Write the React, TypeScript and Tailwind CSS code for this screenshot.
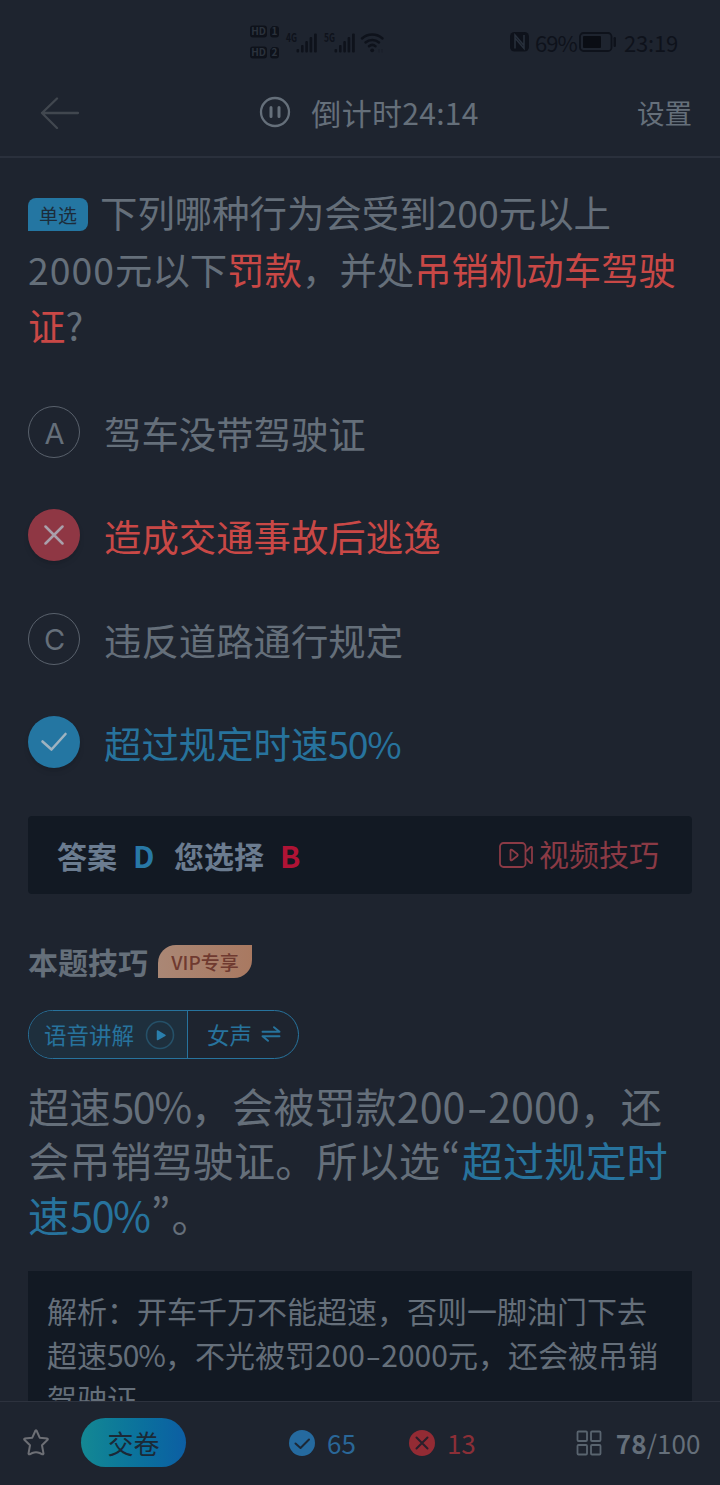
// src/App.tsx
import React from 'react';

type OptionState = 'idle' | 'wrong' | 'right';

interface Option {
  key: string;
  text: string;
  percent?: string;
  state: OptionState;
}

const OPTIONS: Option[] = [
  { key: 'A', text: '驾车没带驾驶证', state: 'idle' },
  { key: 'B', text: '造成交通事故后逃逸', state: 'wrong' },
  { key: 'C', text: '违反道路通行规定', state: 'idle' },
  { key: 'D', text: '超过规定时速', percent: '50%', state: 'right' },
];

const OPTION_COLOR: Record<OptionState, string> = {
  idle: 'text-[#656f7a]',
  wrong: 'text-[#c94846]',
  right: 'text-[#27739d]',
};

const SimTag: React.FC<{ n: string }> = ({ n }) => (
  <svg className="overflow-visible" width="29" height="13" viewBox="0 0 29 13">
    <rect x="0" y="0.5" width="17" height="12" rx="3" fill="#0e121b" />
    <text x="8.5" y="10.2" textAnchor="middle" fontSize="10" fontWeight="700" fill="#2b323d">HD</text>
    <path d="M22.5 1H26a3 3 0 0 1 3 3v5.5a3 3 0 0 1-3 3h-3a3 3 0 0 1-3-3V4z" fill="#0e121b" />
    <text x="24.5" y="10.2" textAnchor="middle" fontSize="10" fontWeight="700" fill="#2b323d">{n}</text>
  </svg>
);

const Signal: React.FC<{ label: string }> = ({ label }) => (
  <svg className="overflow-visible" width="32" height="21" viewBox="0 0 32 21" fill="#0e121b">
    <text x="0" y="10" fontSize="12" fontWeight="700" textLength="11" lengthAdjust="spacingAndGlyphs">{label}</text>
    <rect x="10.5" y="17" width="2.6" height="3.5" rx="1" />
    <rect x="15" y="13" width="2.6" height="7.5" rx="1" />
    <rect x="19.3" y="9" width="2.6" height="11.5" rx="1" />
    <rect x="23.6" y="5" width="2.6" height="15.5" rx="1" />
    <rect x="28" y="1.5" width="2.8" height="19" rx="1" />
  </svg>
);

const StatusBar: React.FC = () => (
  <div className="flex h-[72px] shrink-0 items-center justify-between pt-[12px] pr-[43px] pl-[250px] text-[#0e121b]">
    <div className="flex items-center">
      <div className="flex flex-col gap-[8px]">
        <SimTag n="1" />
        <SimTag n="2" />
      </div>
      <div className="ml-[7px] flex gap-[6px]">
        <Signal label="4G" />
        <Signal label="5G" />
      </div>
      <svg className="ml-[4px]" width="25" height="21" viewBox="0 0 25 21" fill="none" stroke="#0e121b" strokeWidth="2.5" strokeLinecap="round">
        <path d="M2 6.5a15 15 0 0 1 20.5 0" />
        <path d="M5.5 10.5a10 10 0 0 1 13.5 0" />
        <path d="M9 14.3a5 5 0 0 1 6.5 0" />
        <circle cx="12.2" cy="18.3" r="1.9" fill="#0e121b" stroke="none" />
        <path d="M19 17.5v2.5M22 17.5v2.5" strokeWidth="1" stroke="#181d28" />
      </svg>
    </div>
    <div className="flex items-center">
      <svg width="19" height="20" viewBox="0 0 19 20">
        <rect width="19" height="19.5" rx="4.5" fill="#0e121b" />
        <path d="M5 16.5V3l9 10.500M14 3v13.500L5 6" fill="none" stroke="#28303c" strokeWidth="1.5" />
      </svg>
      <span className="ml-[6px] w-[41px] text-[22px] leading-none tracking-[-1px]">69%</span>
      <svg className="ml-[3px]" width="38" height="20" viewBox="0 0 38 20">
        <rect x="1" y="1" width="31.5" height="18" rx="3.5" fill="none" stroke="#0e121b" strokeWidth="1.8" />
        <rect x="4" y="4" width="18" height="12" rx="1" fill="#0a0d14" />
        <rect x="34.5" y="5" width="2.5" height="10" rx="1.2" fill="#0e121b" />
      </svg>
      <span className="ml-[7px] w-[53px] text-[22px] leading-none tracking-[-0.2px]">23:19</span>
    </div>
  </div>
);

const Header: React.FC = () => (
  <header className="flex h-[86px] shrink-0 items-center justify-between border-b-2 border-[#2a303c] pr-[28px] pb-[2px] pl-[40px] text-[#656f7a]">
    <svg width="40" height="32" viewBox="0 0 40 32" fill="none" stroke="#41474f" strokeWidth="2.3" strokeLinecap="round" strokeLinejoin="round">
      <path d="M17 1.5L2 16l15 15M2 16h36" />
    </svg>
    <div className="ml-[21px] flex items-center pb-[2px]">
      <svg width="32" height="32" viewBox="0 0 32 32" fill="none" stroke="#656f7a" strokeWidth="2.3">
        <circle cx="16" cy="16" r="14" />
        <path d="M12 11.500v9M20 11.500v9" strokeWidth="3" strokeLinecap="round" />
      </svg>
      <span className="ml-[20px] text-[30px] leading-none tracking-[0.3px]">倒计时24:14</span>
    </div>
    <span className="text-[27.5px] leading-none">设置</span>
  </header>
);

const OptionMark: React.FC<{ option: Option }> = ({ option }) => {
  if (option.state === 'wrong') {
    return (
      <span className="flex size-[52px] shrink-0 items-center justify-center rounded-full bg-[#8f3744] shadow-md">
        <svg width="20" height="20" viewBox="0 0 20 20" stroke="#a9a0ab" strokeWidth="2.5" strokeLinecap="round">
          <path d="M1.5 1.5l17 17M18.5 1.5l-17 17" />
        </svg>
      </span>
    );
  }
  if (option.state === 'right') {
    return (
      <span className="flex size-[52px] shrink-0 items-center justify-center rounded-full bg-[#2476a2] shadow-md">
        <svg width="28" height="20" viewBox="0 0 28 20" fill="none" stroke="#9fb3c0" strokeWidth="2.6" strokeLinecap="round" strokeLinejoin="round">
          <path d="M2.5 9.5l9 8L25.5 2" />
        </svg>
      </span>
    );
  }
  return (
    <span className="flex size-[52px] shrink-0 items-center justify-center rounded-full border border-[#59616c] pt-[2px] pl-px font-[Inter] text-[29px] leading-none text-[#656f7a]">
      {option.key}
    </span>
  );
};

const Question: React.FC = () => (
  <h1 className="text-[37.4px] leading-[56.5px] font-normal whitespace-nowrap text-[#656f7a]">
    <div className="flex items-center">
      <span className="mt-[5px] mr-[12px] flex h-[33px] w-[60px] items-center justify-center rounded-t-[8px] rounded-br-[8px] bg-[#2476a2] text-[19px] leading-none text-[#1c2c3a]">
        单选
      </span>
      下列哪种行为会受到200元以上
    </div>
    <div>
      <span className="tracking-[1px]">2000</span>元以下<span className="text-[#c94846]">罚款</span>，并处
      <span className="text-[#c94846]">吊销机动车驾驶</span>
    </div>
    <div>
      <span className="text-[#c94846]">证</span>?
    </div>
  </h1>
);

const AnswerBar: React.FC = () => (
  <div className="mt-[47.4px] flex h-[78px] items-center justify-between rounded-[4px] bg-[#121923] pr-[33px] pl-[29px]">
    <div className="flex items-center text-[30px] leading-none font-bold text-[#6b7c90]">
      <span>答案</span>
      <span className="ml-[16px] w-[24px] text-[#2878a6]">D</span>
      <span className="ml-[17px]">您选择</span>
      <span className="ml-[16px] text-[#b01335]">B</span>
    </div>
    <div className="flex items-center text-[30px] leading-none text-[#8b3a45]">
      <svg className="mr-[6px]" width="34" height="26" viewBox="0 0 34 26" fill="none" stroke="#8b3a45" strokeWidth="1.8" strokeLinejoin="round">
        <rect x="1" y="1" width="25.5" height="24" rx="3.5" />
        <path d="M11.500 8.300v9.400q.3 1 1.300.5l5.500-4.200q1-1 0-2l-5.500-4.200q-1-.5-1.300.5z" />
        <path d="M27 9.500l4.500-4.500q1.300-.5 1.500.7v14.600q-.2 1.200-1.500.7L27 16.500" />
      </svg>
      <span className="mb-[4px]">视频技巧</span>
    </div>
  </div>
);

const VoicePill: React.FC = () => (
  <div className="mt-[32px] flex h-[49px] w-[271px] overflow-hidden rounded-full border border-[#27739d] text-[22.5px] leading-none text-[#27739d]">
    <div className="flex w-[159px] items-center border-r border-[#27739d] bg-[#1e2f3d] pl-[15px]">
      <span>语音讲解</span>
      <svg className="mt-[2px] ml-[11px]" width="30" height="30" viewBox="0 0 30 30">
        <circle cx="15" cy="15" r="13.5" fill="none" stroke="#255068" strokeWidth="1.6" />
        <path d="M12.500 11v8.500l7.500-4.200z" fill="#2a7fad" stroke="#2a7fad" strokeWidth="1.5" strokeLinejoin="round" />
      </svg>
    </div>
    <div className="flex items-center pl-[19px]">
      <span>女声</span>
      <svg className="ml-[9px]" width="20" height="16" viewBox="0 0 20 16" fill="none" stroke="#27739d" strokeWidth="1.9" strokeLinecap="round" strokeLinejoin="round">
        <path d="M1.500 5.700h17L13 1.200M18.500 10.300h-17l5.500 4.500" />
      </svg>
    </div>
  </div>
);

const Tip: React.FC = () => (
  <div className="mt-[19px] text-[41.2px] leading-[54.7px] whitespace-nowrap text-[#656f7a]">
    <div>
      超速<span className="ml-px tracking-[-1.4px]">50%</span>，会被罚款200
      <span className="mx-[4.3px] inline-block scale-x-150">-</span>
      2000，还
    </div>
    <div>
      会吊销驾驶证。所以选<span className="mx-[1.2px] [font-feature-settings:'pwid']">“</span>
      <span className="text-[#27739d]">超过规定时</span>
    </div>
    <div>
      <span className="text-[#27739d]">
        速<span className="ml-px tracking-[-1.4px]">50%</span>
      </span>
      <span className="mx-[1.2px] [font-feature-settings:'pwid']">”</span>。
    </div>
  </div>
);

const Footer: React.FC = () => (
  <footer className="flex h-[84px] shrink-0 items-center border-t border-[#2d323e] bg-[#1e242f] pb-[2px] pl-[21px] text-[26px] leading-none">
    <svg width="29" height="29" viewBox="0 0 29 29" fill="none" stroke="#6d6f75" strokeWidth="2" strokeLinejoin="round">
      <path d="M14.500 2.500q.5-.7 1 0l3.200 7.200 7.600.9q1 .4.300 1.200l-5.600 5.400 1.500 8.400q-.2 1-1.200.7l-2.600-1.300q-3.700-1.500-7.400 0l-2.600 1.300q-1 .3-1.200-.7l1.500-8.400-5.600-5.400q-.7-.8.300-1.200l7.600-.9z" />
    </svg>
    <button className="ml-[31px] h-[49px] w-[105px] rounded-full bg-linear-to-r from-[#148893] to-[#0d5ea3] text-[#1b2936]">
      交卷
    </button>
    <div className="ml-[103px] flex items-center text-[#2a6798]">
      <svg width="26" height="26" viewBox="0 0 26 26" fill="none">
        <circle cx="13" cy="13" r="13" fill="#256a9f" />
        <path d="M6.500 13.500l5 4.500 8.500-8.500" stroke="#1c2836" strokeWidth="2" strokeLinecap="round" strokeLinejoin="round" />
      </svg>
      <span className="ml-[12px]">65</span>
    </div>
    <div className="ml-[53px] flex items-center text-[#8b2f37]">
      <svg width="26" height="26" viewBox="0 0 26 26" fill="none">
        <circle cx="13" cy="13" r="13" fill="#932b34" />
        <path d="M7.500 7.500l11 11M18.500 7.500l-11 11" stroke="#291f2b" strokeWidth="2" strokeLinecap="round" />
      </svg>
      <span className="ml-[12px]">13</span>
    </div>
    <div className="ml-[100px] flex items-center text-[#656f7a]">
      <svg width="26" height="26" viewBox="0 0 26 26" fill="none" stroke="#59646f" strokeWidth="1.8">
        <rect x="1.5" y="1.5" width="9.5" height="9.5" rx="1" />
        <rect x="15" y="1.5" width="9.5" height="9.5" rx="1" />
        <rect x="1.5" y="15" width="9.5" height="9.5" rx="1" />
        <rect x="15" y="15" width="9.5" height="9.5" rx="1" />
      </svg>
      <span className="ml-[14px] tracking-[0.1px]"><b>78</b>/100</span>
    </div>
  </footer>
);

const App: React.FC = () => {
  return (
    <div className="flex h-[1485px] w-[720px] flex-col overflow-hidden bg-[#1e242f] font-['Noto_Sans_CJK_SC',sans-serif]">
      <StatusBar />
      <Header />

      <main className="min-h-0 flex-1 overflow-hidden px-[28px] pt-[26px]">
        <Question />

        <ul className="mt-[52.5px] flex flex-col gap-[51.4px]">
          {OPTIONS.map((o) => (
            <li key={o.key} className="flex h-[52px] items-center">
              <OptionMark option={o} />
              <span className={`mt-[3px] ml-[24px] text-[37.4px] leading-none ${OPTION_COLOR[o.state]}`}>
                {o.text}
                {o.percent && <span className="tracking-[-1.3px]">{o.percent}</span>}
              </span>
            </li>
          ))}
        </ul>

        <AnswerBar />

        <div className="mt-[51px] flex h-[33px] items-center">
          <h2 className="text-[30px] leading-none font-bold text-[#656f7a]">本题技巧</h2>
          <span className="ml-[10px] flex h-[33px] w-[94px] items-center justify-center rounded-tl-[18px] rounded-br-[18px] bg-linear-to-r from-[#aa8775] to-[#a97961] text-[19px] leading-none font-medium text-[#6f3a30]">
            VIP专享
          </span>
        </div>

        <VoicePill />
        <Tip />

        <div className="mt-[29px] h-[180px] bg-[#121923] px-[19px] pt-[17px] text-[30px] leading-[44px] whitespace-nowrap text-[#656f7a]">
          <div>解析：开车千万不能超速，否则一脚油门下去</div>
          <div>
            超速<span className="tracking-[-1px]">50%</span>，不光被罚200
            <span className="mx-[3px] inline-block scale-x-150">-</span>
            2000元，还会被吊销
          </div>
          <div>驾驶证</div>
        </div>
      </main>

      <Footer />
    </div>
  );
};

export default App;
